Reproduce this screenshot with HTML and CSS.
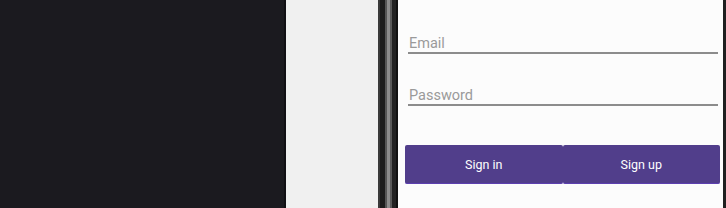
FILE: index.html
```html
<!DOCTYPE html>
<html>
<head>
<meta charset="utf-8">
<link rel="stylesheet" href="styles.css">
</head>
<body>
<div class="page">
  <div class="desk"></div>
  <div class="backdrop"></div>
  <div class="frame"></div>
  <div class="screen">
    <form class="form">
      <label class="field"><span class="placeholder">Email</span></label>
      <label class="field"><span class="placeholder">Password</span></label>
      <div class="actions">
        <button type="button" class="btn">Sign in</button>
        <button type="button" class="btn">Sign up</button>
      </div>
    </form>
  </div>
  <div class="edge"></div>
</div>
</body>
</html>
```
FILE: styles.css
```css
html, body {
  margin: 0;
  padding: 0;
  height: 100%;
  overflow: hidden;
}
body {
  font-family: Roboto, "Noto Sans", sans-serif;
}
.page {
  display: flex;
  height: 208px;
  width: 726px;
}
.desk {
  width: 284px;
  background: #1b1a1f;
  border-right: 2px solid #111014;
}
.backdrop {
  width: 92px;
  background: #f0f0f0;
}
.frame {
  width: 20px;
  background: linear-gradient(to right,
    #3a3a3a 0, #3a3a3a 2px,
    #1c1c1c 2px, #1c1c1c 7px,
    #555 7px, #555 9px,
    #8c8c8c 9px, #8c8c8c 12px,
    #5a5a5a 12px, #5a5a5a 14px,
    #222 14px, #222 18px,
    #111 18px, #111 20px);
}
.screen {
  flex: 1;
  background: #fcfcfc;
  padding: 35px 5px 0 10px;
}
.form {
  display: flex;
  flex-direction: column;
  gap: 33px;
}
.field {
  display: block;
  border-bottom: 2px solid #8c8c8c;
  line-height: 17px;
  font-size: 14.5px;
  color: #9a9a9a;
  padding-left: 1px;
}
.actions {
  display: flex;
  margin: 6px -2px 0 -3px;
  gap: 0;
}
.btn {
  flex: 1;
  height: 39px;
  border: none;
  border-bottom: 1px solid #5c3fb0;
  border-radius: 2px;
  background: #513e8b;
  color: #fff;
  font-family: Roboto, "Noto Sans", sans-serif;
  font-size: 12.5px;
  font-weight: 400;
  padding: 1px 0 0;
}
.edge {
  width: 3px;
  background: #202020;
}
```
